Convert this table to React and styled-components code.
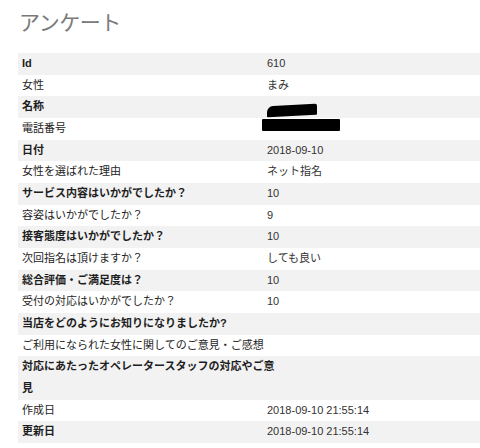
import React from "react";
import styled, { createGlobalStyle } from "styled-components";

const GlobalStyle = createGlobalStyle`
  body {
    margin: 0;
    background: #fff;
    font-family: "Liberation Sans", "Noto Sans CJK JP", sans-serif;
  }
`;

const rows = [
  { label: "Id", value: "610" },
  { label: "女性", value: "まみ" },
  { label: "名称", redact: "name" },
  { label: "電話番号", redact: "phone" },
  { label: "日付", value: "2018-09-10" },
  { label: "女性を選ばれた理由", value: "ネット指名" },
  { label: "サービス内容はいかがでしたか？", value: "10" },
  { label: "容姿はいかがでしたか？", value: "9" },
  { label: "接客態度はいかがでしたか？", value: "10" },
  { label: "次回指名は頂けますか？", value: "しても良い" },
  { label: "総合評価・ご満足度は？", value: "10" },
  { label: "受付の対応はいかがでしたか？", value: "10" },
  { label: "当店をどのようにお知りになりましたか?", full: true },
  { label: "ご利用になられた女性に関してのご意見・ご感想", full: true },
  { label: ["対応にあたったオペレータースタッフの対応やご意", "見"], full: true },
  { label: "作成日", value: "2018-09-10 21:55:14" },
  { label: "更新日", value: "2018-09-10 21:55:14" },
];

const Survey = () => (
  <Page>
    <Title>アンケート</Title>
    <Table>
      {rows.map((row, i) => {
        const striped = i % 2 === 0;
        return (
          <Row key={i} $striped={striped}>
            <Label $striped={striped} $full={row.full}>
              {Array.isArray(row.label)
                ? row.label.map((l, j) => <div key={j}>{l}</div>)
                : row.label}
            </Label>
            {!row.full && (
              <Value>
                {row.redact ? <Redaction $kind={row.redact} /> : row.value}
              </Value>
            )}
          </Row>
        );
      })}
    </Table>
  </Page>
);

const Page = styled.div`
  padding: 6px 0 0 18px;
  width: 462px;
  height: 442px;
  overflow: hidden;
`;

const Title = styled.h1`
  margin: 0 0 17px 1px;
  font-family: "Noto Sans CJK JP", sans-serif;
  font-size: 21px;
  line-height: 30px;
  font-weight: 400;
  color: #7a7a7a;
  letter-spacing: -0.5px;
`;

const Table = styled.div`
  display: flex;
  flex-direction: column;
`;

const Row = styled.div`
  display: grid;
  grid-template-columns: 245px 1fr;
  background: ${(p) => (p.$striped ? "#f2f2f2" : "#fff")};
  font-size: 11px;
  line-height: 21.67px;
`;

const Label = styled.div`
  padding-left: 4px;
  grid-column: ${(p) => (p.$full ? "1 / -1" : "auto")};
  white-space: nowrap;
  font-weight: ${(p) => (p.$striped ? 700 : 400)};
  color: #1e1e1e;
`;

const Value = styled.div`
  padding-left: 4px;
  color: #333;
  display: flex;
  align-items: center;
`;

const Redaction = styled.div`
  background: #000;
  height: ${(p) => (p.$kind === "name" ? "11px" : "12px")};
  width: ${(p) => (p.$kind === "name" ? "50px" : "78px")};
  margin-left: ${(p) => (p.$kind === "name" ? "0" : "-5px")};
  margin-top: ${(p) => (p.$kind === "name" ? "6px" : "-8px")};
  border-radius: ${(p) => (p.$kind === "name" ? "6px 2px 1px 1px" : "1px")};
  transform: ${(p) => (p.$kind === "name" ? "skewY(-3deg)" : "none")};
`;

export default function App() {
  return (
    <>
      <GlobalStyle />
      <Survey />
    </>
  );
}
